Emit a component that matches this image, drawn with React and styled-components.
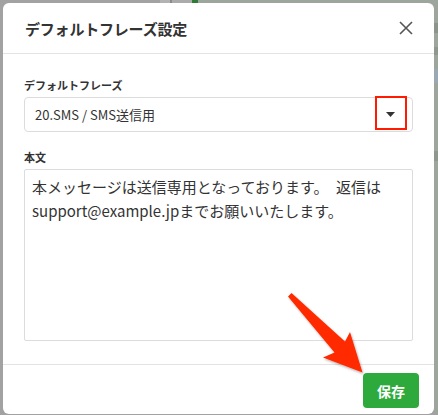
import React from "react";
import styled, { createGlobalStyle } from "styled-components";

const Global = createGlobalStyle`
  html, body { margin: 0; padding: 0; }
  body {
    font-family: "Noto Sans CJK JP", "Noto Sans", sans-serif;
    background: #a2a2a2;
  }
`;

const Page = styled.div`
  position: relative;
  width: 438px;
  height: 415px;
  overflow: hidden;
  background: #a2a2a2;
`;

const BackStrip = styled.div`
  display: flex;
  height: 3px;
`;

const Seg = styled.div`
  width: ${(p) => p.$w}px;
  flex: ${(p) => (p.$w ? "none" : "1")};
  background: ${(p) => p.$c};
`;

const Stage = styled.div`
  display: flex;
  padding-left: 3px;
`;

const Modal = styled.div`
  width: 431px;
  height: 411px;
  background: #fff;
  border-radius: 6px;
  display: flex;
  flex-direction: column;
  overflow: hidden;
`;

const SideBits = styled.div`
  flex: 1;
  background: #9da59d;
  display: flex;
  flex-direction: column;
  padding-top: 20px;
  gap: 14px;
  overflow: hidden;
`;

const Bit = styled.div`
  height: ${(p) => p.$h}px;
  width: 4px;
  background: ${(p) => p.$c};
`;

const Header = styled.div`
  height: 51px;
  box-sizing: border-box;
  border-bottom: 1px solid #e3e3e3;
  display: flex;
  align-items: center;
  justify-content: space-between;
  padding: 0 21px 0 22px;
`;

const Title = styled.h2`
  margin: 0;
  font-size: 15px;
  font-weight: 700;
  color: #333;
  letter-spacing: -0.2px;
`;

const CloseBtn = styled.button`
  border: 0;
  background: none;
  padding: 0;
  width: 15px;
  height: 15px;
  display: flex;
  align-items: center;
  justify-content: center;
  cursor: pointer;
`;

const Body = styled.div`
  flex: 1;
  display: flex;
  flex-direction: column;
  padding: 23px 21px 22px 21px;
  border-bottom: 1px solid #e3e3e3;
`;

const Label = styled.label`
  font-size: 11px;
  line-height: 16px;
  font-weight: 700;
  color: #333;
  margin-bottom: 4px;
`;

const SelectWrap = styled.div`
  position: relative;
  height: 35px;
  box-sizing: border-box;
  border: 1px solid #dcdcdc;
  border-radius: 4px;
  display: flex;
  align-items: center;
  justify-content: space-between;
  padding: 0 17px 0 10px;
  margin-bottom: 17px;
`;

const SelectText = styled.span`
  font-size: 13px;
  color: #333;
`;

const Highlight = styled.div`
  position: absolute;
  left: 350px;
  top: -2px;
  width: 32px;
  height: 34px;
  box-sizing: border-box;
  border: 2.5px solid #ff1a00;
`;

const TextArea = styled.textarea`
  height: 172px;
  box-sizing: border-box;
  border: 1px solid #dcdcdc;
  border-radius: 2px;
  padding: 5px 7px;
  font-family: "Noto Sans CJK JP", "Noto Sans", sans-serif;
  font-size: 15px;
  line-height: 24px;
  color: #333;
  resize: none;
  outline: none;
  white-space: pre-wrap;
`;

const Footer = styled.div`
  height: 49px;
  display: flex;
  align-items: flex-start;
  justify-content: flex-end;
  padding: 8px 15px 0 0;
  box-sizing: border-box;
`;

const SaveButton = styled.button`
  width: 56px;
  height: 35px;
  border: 0;
  border-radius: 4px;
  background: #2eaa3c;
  color: #fff;
  font-family: "Noto Sans CJK JP", "Noto Sans", sans-serif;
  font-size: 14px;
  font-weight: 700;
  cursor: pointer;
`;

const Overlay = styled.svg`
  position: absolute;
  left: 0;
  top: 0;
  pointer-events: none;
`;

const text =
  "本メッセージは送信専用となっております。　返信は\nsupport@example.jpまでお願いいたします。";

export default function App() {
  return (
    <Page>
      <Global />
      <BackStrip>
        <Seg $w={160} $c="#a2a2a2" />
        <Seg $w={10} $c="#b3b3b3" />
        <Seg $w={2} $c="#8a8a8a" />
        <Seg $w={20} $c="#ababab" />
        <Seg $w={6} $c="#2f7a35" />
        <Seg $c="#9ca69c" />
      </BackStrip>
      <Stage>
        <Modal>
          <Header>
            <Title>デフォルトフレーズ設定</Title>
            <CloseBtn aria-label="閉じる">
              <svg width="14" height="14" viewBox="0 0 14 14">
                <path d="M1 1L13 13M13 1L1 13" stroke="#555" strokeWidth="1.6" fill="none" />
              </svg>
            </CloseBtn>
          </Header>
          <Body>
            <Label>デフォルトフレーズ</Label>
            <SelectWrap>
              <SelectText>20.SMS / SMS送信用</SelectText>
              <svg width="9" height="5" viewBox="0 0 9 5">
                <path d="M0 0H9L4.5 5Z" fill="#333" />
              </svg>
              <Highlight />
            </SelectWrap>
            <Label>本文</Label>
            <TextArea readOnly value={text} />
          </Body>
          <Footer>
            <SaveButton>保存</SaveButton>
          </Footer>
        </Modal>
        <SideBits>
          <Bit $h={10} $c="#8c948c" />
          <Bit $h={8} $c="#8f978f" />
          <Bit $h={14} $c="#9aa7b5" />
          <Bit $h={40} $c="#9da59d" />
          <Bit $h={10} $c="#8f978f" />
        </SideBits>
      </Stage>
      <Overlay width="438" height="415" viewBox="0 0 438 415">
        <defs>
          <filter id="sh" x="-20%" y="-20%" width="140%" height="140%">
            <feDropShadow dx="1" dy="1.5" stdDeviation="1.2" floodColor="#000" floodOpacity="0.3" />
          </filter>
        </defs>
        <path
          d="M288 296.5 L291.5 293 L345 341.5 L350 332 L362.5 372.5 L323 357.5 L334.5 352.5 Z"
          fill="#ff2a00"
          filter="url(#sh)"
        />
      </Overlay>
    </Page>
  );
}
